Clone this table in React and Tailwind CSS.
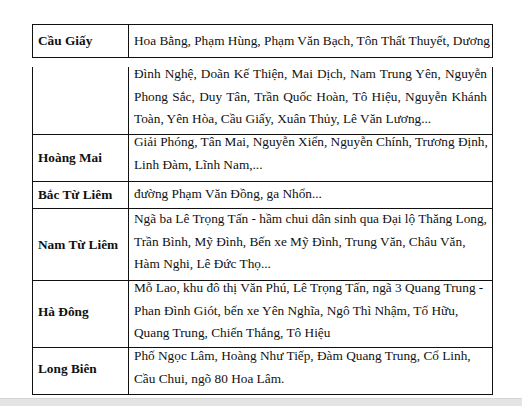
import React from "react";

const font = { fontFamily: '"Liberation Serif", "Times New Roman", serif' };

// each street cell is a list of lines; "j" lines are stretched to the cell edge
const rows = [
  {
    name: "",
    h: "h-[68px]",
    shift: "-mt-[4px]",
    lines: [
      { t: "Đình Nghệ, Doãn Kế Thiện, Mai Dịch, Nam Trung Yên, Nguyễn", j: true },
      { t: "Phong Sắc, Duy Tân, Trần Quốc Hoàn, Tô Hiệu, Nguyễn Khánh", j: true },
      { t: "Toàn, Yên Hòa, Cầu Giấy, Xuân Thủy, Lê Văn Lương..." },
    ],
  },
  {
    name: "Hoàng Mai",
    h: "h-[47px]",
    shift: "-mt-[4px]",
    lines: [
      { t: "Giải Phóng, Tân Mai, Nguyễn Xiển, Nguyễn Chính, Trương Định,", j: true },
      { t: "Linh Đàm, Lĩnh Nam,..." },
    ],
  },
  {
    name: "Bắc Từ Liêm",
    h: "h-[27px]",
    shift: "-mt-[1px]",
    lines: [{ t: "đường Phạm Văn Đồng, ga Nhổn..." }],
  },
  {
    name: "Nam Từ Liêm",
    h: "h-[72px]",
    shift: "-mt-[1px]",
    lines: [
      { t: "Ngã ba Lê Trọng Tấn - hầm chui dân sinh qua Đại lộ Thăng Long," },
      { t: "Trần Bình, Mỹ Đình, Bến xe Mỹ Đình, Trung Văn, Châu Văn," },
      { t: "Hàm Nghi, Lê Đức Thọ..." },
    ],
  },
  {
    name: "Hà Đông",
    h: "h-[67px]",
    shift: "-mt-[4px]",
    label: "-mt-[4px]",
    lines: [
      { t: "Mỗ Lao, khu đô thị Văn Phú, Lê Trọng Tấn, ngã 3 Quang Trung -" },
      { t: "Phan Đình Giót, bến xe Yên Nghĩa, Ngô Thì Nhậm, Tố Hữu," },
      { t: "Quang Trung, Chiến Thắng, Tô Hiệu" },
    ],
  },
  {
    name: "Long Biên",
    h: "h-[47px]",
    shift: "-mt-[3px]",
    label: "-mt-[4px]",
    lines: [
      { t: "Phố Ngọc Lâm, Hoàng Như Tiếp, Đàm Quang Trung, Cổ Linh," },
      { t: "Cầu Chui, ngõ 80 Hoa Lâm." },
    ],
  },
];

function Lines({ lines, shift }) {
  return (
    <div className={`px-[5px] ${shift}`}>
      {lines.map((l, i) => (
        <div
          key={i}
          className={
            "leading-[22.5px] whitespace-nowrap " +
            (l.j ? "text-justify [text-align-last:justify]" : "")
          }
        >
          {l.t}
        </div>
      ))}
    </div>
  );
}

export default function App() {
  return (
    <div
      className="relative w-[522px] h-[406px] overflow-hidden bg-white text-[13.3px] text-[#111]"
      style={font}
    >
      <div className="pt-[24px] pl-[32px]">
        {/* end of the previous page */}
        <div className="w-[461px] h-[34px] grid grid-cols-[96px_1fr] border border-[#111]">
          <div className="border-r border-[#111] flex items-center pl-[5px] font-bold">
            Cầu Giấy
          </div>
          <div className="flex items-center">
            <div className="w-full px-[5px] leading-[22.5px] whitespace-nowrap text-justify [text-align-last:justify]">
              Hoa Bằng, Phạm Hùng, Phạm Văn Bạch, Tôn Thất Thuyết, Dương
            </div>
          </div>
        </div>

        {/* continued table */}
        <div className="mt-[9px] w-[461px] border-l border-r border-[#111]">
          {rows.map((r, i) => (
            <div
              key={i}
              className={`${r.h} grid grid-cols-[96px_1fr] border-b border-[#111]`}
            >
              <div className="border-r border-[#111] flex items-center pl-[5px] font-bold">
                <span className={r.label || ""}>{r.name}</span>
              </div>
              <div className={r.name === "Bắc Từ Liêm" ? "flex items-center" : ""}>
                <div className="w-full">
                  <Lines lines={r.lines} shift={r.shift} />
                </div>
              </div>
            </div>
          ))}
        </div>
      </div>
      <div className="absolute left-0 right-0 bottom-0 h-[8px] bg-[#e4e4e4] border-t border-[#d6d6d6]" />
    </div>
  );
}
